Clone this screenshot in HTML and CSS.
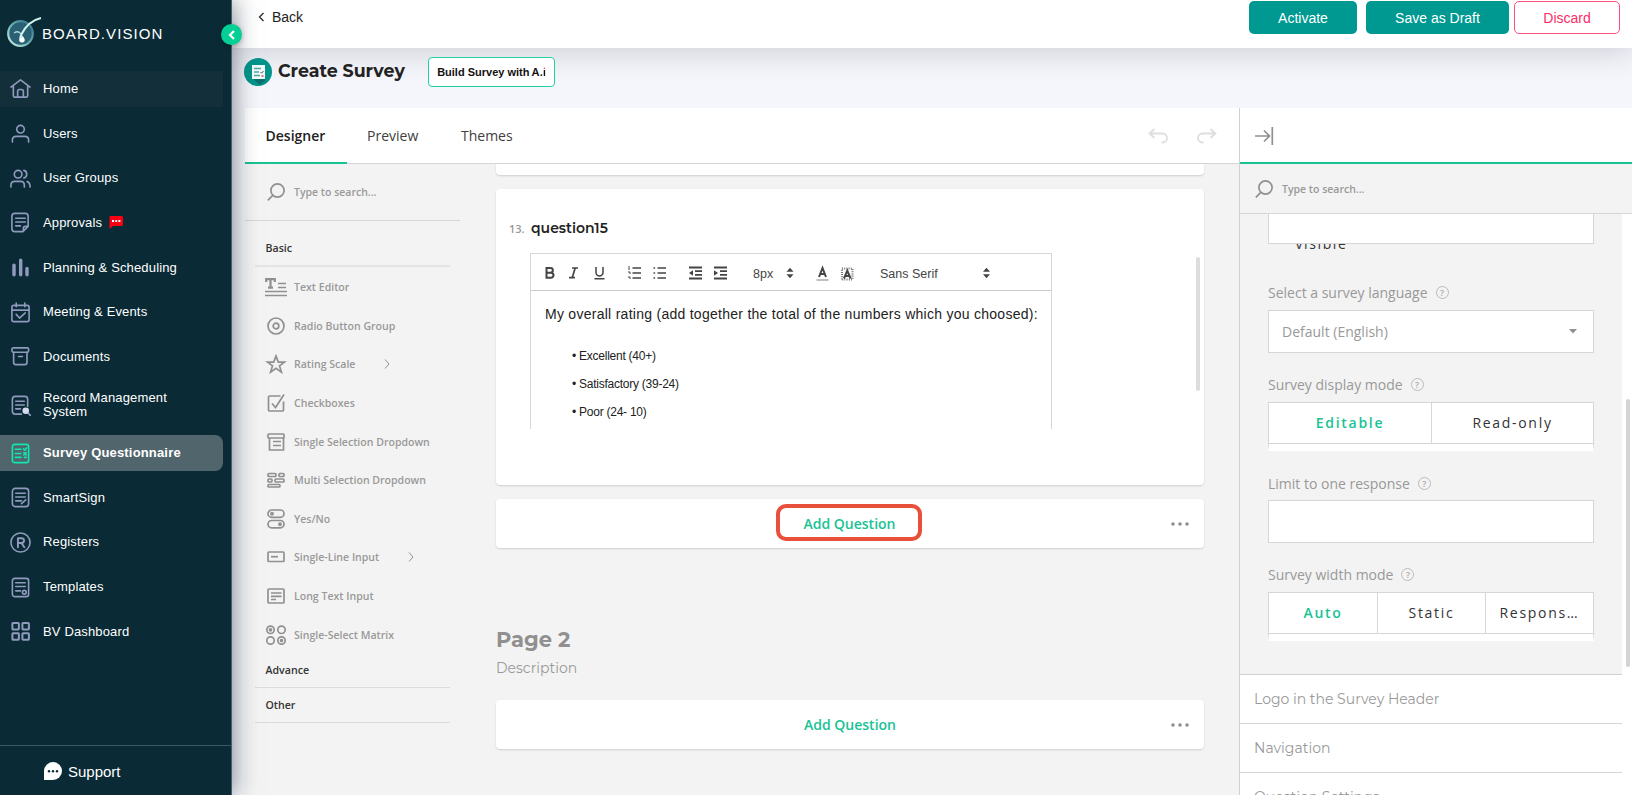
FILE: index.html
```html
<!DOCTYPE html>
<html lang="en">
<head>
<meta charset="utf-8">
<title>Create Survey</title>
<link rel="stylesheet" href="styles.css">
</head>
<body>
<div class="app">
  <aside class="sidebar">
    <div class="brand">
      <svg width="36" height="32" viewBox="0 0 36 32"><defs><linearGradient id="lg" x1="0" y1="1" x2="1" y2="0"><stop offset="0" stop-color="#d5f2ec"/><stop offset=".45" stop-color="#6db3b5"/><stop offset="1" stop-color="#2b6f86"/></linearGradient></defs><circle cx="14.500" cy="17.500" r="12.300" fill="#2a6074" stroke="url(#lg)" stroke-width="2.200"/><path d="M35 2C26 4 19 11 15 19c-1 3-1 6 0 6 3 1 3-1 2-3-1-1-2-2-2-3" fill="none" stroke="#d5f3ec" stroke-width="2"/><path d="M8 17c3-2 5-2 7 1" fill="none" stroke="#a9dcd6" stroke-width="1.300"/><circle cx="16" cy="24" r="2.500" fill="#fff"/></svg>
      <span>BOARD.VISION</span>
    </div>
    <nav class="menu">
      <a class="mi home"><svg class="ic" viewBox="0 0 22 22"><path d="M1 9.500 11 2l10 7.500M3.500 8v10.500q0 1.500 1.500 1.500h12q1.500 0 1.500-1.500V8M8 20v-6q0-2 2-2h2q2 0 2 2v6"/></svg><span>Home</span></a>
      <a class="mi"><svg class="ic" viewBox="0 0 22 22"><circle cx="11" cy="6.500" r="4"/><path d="M2.500 20v-2q0-4 4-4h9q4 0 4 4v2"/></svg><span>Users</span></a>
      <a class="mi"><svg class="ic" viewBox="0 0 22 22"><circle cx="8.500" cy="6.500" r="4"/><path d="M1 20v-2q0-4 4-4h6q4 0 4 4v2M14.500 2.500c4 1 4 7 0 8M18 14.300c2.500.7 3 2.200 3 5.700"/></svg><span>User Groups</span></a>
      <a class="mi"><svg class="ic" viewBox="0 0 22 22"><path d="M5 1.500h11q3 0 3 3V15l-5.500 5.500H5q-3 0-3-3v-13q0-3 3-3zM6 6.500h10M6 10.500h10M6 14.500h5M19 15h-3q-2 0-2 2v3"/></svg><span>Approvals</span><svg class="flag" width="14" height="13" viewBox="0 0 14 13"><path d="M1.500 0h11Q14 0 14 1.500v7Q14 10 12.500 10H4L.500 13V1.500Q.500 0 1.500 0z" fill="#fb0012"/><path d="M3 4h2v2H3zM6.200 4h2v2h-2zM9.400 4h2v2h-2z" fill="#fff"/></svg></a>
      <a class="mi"><svg class="ic" viewBox="0 0 22 22"><path d="M4.200 8.500v10M11.200 3.500v15M17.800 12v6.500" stroke-width="3.600"/></svg><span>Planning &amp; Scheduling</span></a>
      <a class="mi"><svg class="ic" viewBox="0 0 22 22"><rect x="2" y="3.500" width="18" height="17" rx="2"/><path d="M2 8.500h18M6.500 1v4M15.500 1v4M6.500 13l3.500 3.800 6-5.300"/></svg><span>Meeting &amp; Events</span></a>
      <a class="mi"><svg class="ic" viewBox="0 0 22 22"><rect x="2" y="2" width="17.500" height="4.500" rx="1.500"/><path d="M3.800 6.500v10.500q0 2.500 2.500 2.500h9q2.500 0 2.500-2.500V6.500M9 11h4"/></svg><span>Documents</span></a>
      <a class="mi tall"><svg class="ic" viewBox="0 0 22 22"><path d="M12 20H5.500Q2.500 20 2.500 17V4.500q0-3 3-3h10q3 0 3 3V12M6 6.500h9M6 10.500h9M6 14.500h5M19 19l2.500 2.500"/><circle cx="16.500" cy="16.500" r="2.600" fill="#d7dbf0" stroke="#d7dbf0"/></svg><span>Record Management<br>System</span></a>
      <a class="mi active"><svg class="ic" viewBox="0 0 22 22"><rect x="2.500" y="1.500" width="17" height="19" rx="2.500"/><path d="M5.500 6.500h6M5.500 11h6M5.500 15h6M14 6l1.500 1.500L17.500 5M14.500 10l2.500 2.500M17 10l-2.500 2.500M15 15h2"/></svg><span>Survey Questionnaire</span></a>
      <a class="mi"><svg class="ic" viewBox="0 0 22 22"><rect x="2.500" y="1.500" width="17" height="19" rx="3"/><path d="M6 6.500h10M6 10.500h10M6 14.500h6M12 17.500l4.500-4"/></svg><span>SmartSign</span></a>
      <a class="mi"><svg class="ic" viewBox="0 0 22 22"><circle cx="11" cy="11" r="10"/><path d="M8.300 16V6.500H12q2.700 0 2.700 2.500T12 11.500H8.300M12 11.500 15 16" stroke-width="2"/></svg><span>Registers</span></a>
      <a class="mi"><svg class="ic" viewBox="0 0 22 22"><rect x="2.500" y="1.500" width="17" height="19" rx="2.500"/><path d="M6 6h10M6 10h10M6 14.500h5"/><circle cx="15" cy="16" r="2"/></svg><span>Templates</span></a>
      <a class="mi"><svg class="ic" viewBox="0 0 22 22"><g stroke-width="2.100"><rect x="2.500" y="2" width="6.800" height="6.800" rx=".8"/><rect x="13" y="2" width="6.800" height="6.800" rx=".8"/><rect x="2.500" y="12.800" width="6.800" height="6.800" rx=".8"/><rect x="13" y="12.800" width="6.800" height="6.800" rx=".8"/></g></svg><span>BV Dashboard</span></a>
    </nav>
    <div class="support"><svg width="18" height="18" viewBox="0 0 18 18"><path d="M9 0a9 9 0 1 1 0 18H0V9a9 9 0 0 1 9-9z" fill="#fff"/><g fill="#0a2a35"><circle cx="5" cy="9.300" r="1.200"/><circle cx="9" cy="9.300" r="1.200"/><circle cx="13" cy="9.300" r="1.200"/></g></svg><span>Support</span></div>
    <div class="collapse"><svg width="8" height="10" viewBox="0 0 8 10"><path d="M6 1 2 5l4 4" fill="none" stroke="#fff" stroke-width="2.200"/></svg></div>
  </aside>

  <main class="main">
    <header class="top">
      <div class="back"><svg width="7" height="10" viewBox="0 0 7 10"><path d="M5.500 1 1.500 5l4 4" fill="none" stroke="#333" stroke-width="1.400"/></svg><span>Back</span></div>
      <div class="actions"><button class="btn b1">Activate</button><button class="btn b2">Save as Draft</button><button class="btn b3">Discard</button></div>
    </header>
    <div class="title">
      <svg width="28" height="28" viewBox="0 0 28 28"><circle cx="14" cy="14" r="14" fill="#03958b"/><path d="M21 8v15l-5 4-8-7z" fill="#0b6f6d"/><rect x="8" y="7" width="13" height="14" fill="#f4fbfb"/><path d="M10 10.500h7M10 14h5M10 17.500h6" stroke="#4aa8a6" stroke-width="1.300"/><path d="m16.500 14 1.200 1.200L19.500 13" fill="none" stroke="#333" stroke-width=".8"/><path d="M17.500 17H19.500V19H17.500z" fill="#f26a7c"/></svg>
      <h1>Create Survey</h1>
      <button class="ai"><span>Build Survey with</span><span class="aa">A.<span class="idot">i</span></span></button>
    </div>

    <div class="creator">
      <section class="left">
        <div class="tabs">
          <div class="tab on">Designer</div><div class="tab t2">Preview</div><div class="tab t3">Themes</div>
          <div class="hist">
            <svg width="20" height="16" viewBox="0 0 20 16"><path d="M6.500 1 1.500 5.500 6.500 10M2 5.500h12.500a4.300 4.300 0 0 1 0 9h-1"/></svg>
            <svg width="20" height="16" viewBox="0 0 20 16"><path d="M13.500 1 18.500 5.500 13.500 10M18 5.500H5.500a4.300 4.300 0 0 0 0 9h1"/></svg>
          </div>
        </div>
        <div class="work">
          <div class="toolbox">
            <div class="search"><svg width="18" height="18" viewBox="0 0 18 18"><circle cx="10.500" cy="7.500" r="6.600"/><path d="M6 12.200.800 17.300"/></svg><span>Type to search...</span></div>
            <div class="cat basic">Basic</div>
            <div class="ti"><svg viewBox="0 0 22 20" class="tic"><path d="M1.200 5V2.200h8.600V5M5.500 2v8.500M3 10.700h5" stroke-width="2.200"/><path d="M13 6.500h8M13 10.500h8M0 14.500h22M0 18.500h22" stroke-width="1.500"/></svg><span>Text Editor</span></div>
            <div class="ti"><svg viewBox="0 0 22 20" class="tic"><circle cx="11" cy="10" r="8"/><circle cx="11" cy="10" r="2.800"/></svg><span>Radio Button Group</span></div>
            <div class="ti"><svg viewBox="0 0 22 20" class="tic"><path d="m11 2 2.300 6.100h6.200l-5 3.700 1.900 6.300L11 14.300l-5.400 3.800 1.900-6.300-5-3.700h6.200z"/></svg><span>Rating Scale</span><svg class="chev" viewBox="0 0 6 10"><path d="m1 .500 4 4.500-4 4.500"/></svg></div>
            <div class="ti"><svg viewBox="0 0 22 20" class="tic"><path d="M15.500 3H4.500Q3.500 3 3.500 4v13q0 1 1 1h13q1 0 1-1V8.500M7 10.500l3.500 4L19 1.500"/></svg><span>Checkboxes</span></div>
            <div class="ti"><svg viewBox="0 0 22 20" class="tic"><rect x="3" y="2" width="16" height="4" rx=".8"/><path d="M4.500 6v12h14V6M8 9.500h8M8 13.500h8"/></svg><span>Single Selection Dropdown</span></div>
            <div class="ti"><svg viewBox="0 0 22 20" class="tic"><rect x="3" y="3.500" width="8" height="3" rx="1"/><rect x="14" y="3.500" width="5" height="3" rx="1"/><rect x="3" y="9" width="4" height="3" rx="1"/><rect x="10" y="9" width="9" height="3" rx="1"/><rect x="3" y="14.500" width="12" height="2.500" rx="1"/></svg><span>Multi Selection Dropdown</span></div>
            <div class="ti"><svg viewBox="0 0 22 20" class="tic"><rect x="3" y="1" width="16" height="7.300" rx="3.600"/><rect x="3" y="11.500" width="16" height="7.300" rx="3.600"/><circle cx="7" cy="4.700" r="1.100"/><circle cx="15" cy="15.200" r="1.100"/></svg><span>Yes/No</span></div>
            <div class="ti"><svg viewBox="0 0 22 20" class="tic"><rect x="3" y="5" width="16" height="9.500" rx="1"/><path d="M6 9.700h7"/></svg><span>Single-Line Input</span><svg class="chev" viewBox="0 0 6 10"><path d="m1 .500 4 4.500-4 4.500"/></svg></div>
            <div class="ti"><svg viewBox="0 0 22 20" class="tic"><rect x="3" y="3" width="16" height="14" rx="1"/><path d="M6 7h10.500M6 10.300h10.500M6 13.500h5"/></svg><span>Long Text Input</span></div>
            <div class="ti"><svg viewBox="0 0 22 20" class="tic"><circle cx="5.500" cy="4.800" r="3.700"/><circle cx="16.500" cy="4.800" r="3.700"/><circle cx="5.500" cy="15.500" r="3.700"/><circle cx="16.500" cy="15.500" r="3.700"/><circle cx="5.500" cy="4.800" r="1"/><circle cx="16.500" cy="15.500" r="1"/></svg><span>Single-Select Matrix</span></div>
            <div class="cat adv">Advance</div>
            <div class="cat oth">Other</div>
          </div>
          <div class="canvas">
            <div class="card stub"></div>
            <div class="card question">
              <div class="qbody">
                <div class="qt"><span class="num">13.</span><span class="qname">question15</span></div>
                <div class="editor">
                  <div class="bar">
                    <svg width="460" height="20" viewBox="0 0 460 20" class="barsvg">
                      <g fill="none" stroke="#444" stroke-width="2">
                        <path d="M1.500 5h4a2.300 2.300 0 0 1 0 4.700h-4zM1.500 9.700h4.500a2.500 2.500 0 0 1 0 5H1.500z"/>
                        <path d="M27 5h6M24 14.700h6M30.200 5l-3 9.700" stroke-width="1.700"/>
                        <path d="M51 4v5.500a3.500 3.500 0 0 0 7 0V4M49.500 15.700h10" stroke-width="1.500"/>
                        <path d="M87.500 5h8.500M87.500 10h8.500M87.500 15h8.500M112.500 5h8.500M112.500 10h8.500M112.500 15h8.500" stroke-width="1.700"/>
                        <path d="M84 3v4M83 9h2v2M83 14h2v2" stroke-width="1"/>
                        <path d="M108.500 5h1.600M108.500 10h1.600M108.500 15h1.600" stroke-width="1.700"/>
                        <path d="M144 4.500h13M150 8.200h7M150 11.800h7M144 15.500h13M169 4.500h13M175 8.200h7M175 11.800h7M169 15.500h13" stroke-width="1.800"/>
                        <path d="M271.500 17h12" stroke="#aaa" stroke-width="1.500"/>
                        <path d="m274 14 3.500-9 3.500 9M275.500 11h4.500"/>
                        <path d="M297 16.500V5.500h10.500v11z" stroke-dasharray="1 1.200" stroke-width="2.200" stroke="#777"/>
                        <path d="m299 15.500 3.300-8 3.300 8M300.500 13h4"/>
                      </g>
                      <g fill="#444"><path d="m144 10 4-2.700v5.500zM173 10l-4-2.700v5.500zM241.500 8.800l3.500-4 3.500 4zM241.500 11.200l3.500 4 3.500-4zM445 8.800h-7l3.500-4zM438 11.200h7l-3.500 4z"/></g>
                    </svg>
                    <span class="px">8px</span><span class="ff">Sans Serif</span>
                  </div>
                  <p>My overall rating (add together the total of the numbers which you choosed):</p>
                  <div class="li">• Excellent (40+)</div><div class="li">• Satisfactory (39-24)</div><div class="li">• Poor (24- 10)</div>
                </div>
              </div>
              <div class="qscroll"></div>
            </div>
            <div class="card add"><span class="ring">Add Question</span><svg class="dots" width="18" height="4" viewBox="0 0 18 4"><circle cx="2" cy="2" r="1.800"/><circle cx="9" cy="2" r="1.800"/><circle cx="16" cy="2" r="1.800"/></svg></div>
            <h2>Page 2</h2>
            <div class="desc">Description</div>
            <div class="card add"><span class="addtxt">Add Question</span><svg class="dots" width="18" height="4" viewBox="0 0 18 4"><circle cx="2" cy="2" r="1.800"/><circle cx="9" cy="2" r="1.800"/><circle cx="16" cy="2" r="1.800"/></svg></div>
          </div>
        </div>
      </section>

      <aside class="props">
        <div class="phead"><svg width="20" height="18" viewBox="0 0 20 18"><path d="M0 9h14M9 3.500 14.500 9 9 14.500M17.300 0v18" fill="none" stroke="#909090" stroke-width="1.700"/></svg></div>
        <div class="search psearch"><svg width="18" height="18" viewBox="0 0 18 18"><circle cx="10.500" cy="7.500" r="6.600"/><path d="M6 12.200.800 17.300"/></svg><span>Type to search...</span></div>
        <div class="pscroll">
          <div class="grey">
            <div class="box cut"></div>
            <div class="vis"><span>visible</span></div>
            <div class="lbl l1"><span>Select a survey language</span><i>?</i></div>
            <div class="box sel"><span>Default (English)</span><svg width="8" height="5" viewBox="0 0 8 5"><path d="M0 0h8L4 4.500z" fill="#909090"/></svg></div>
            <div class="lbl l2"><span>Survey display mode</span><i>?</i></div>
            <div class="seg two"><b>Editable</b><span>Read-only</span></div>
            <div class="lbl l3"><span>Limit to one response</span><i>?</i></div>
            <div class="box"></div>
            <div class="lbl l2"><span>Survey width mode</span><i>?</i></div>
            <div class="seg three"><b>Auto</b><span>Static</span><span>Respons…</span></div>
          </div>
          <div class="prow">Logo in the Survey Header</div>
          <div class="prow">Navigation</div>
          <div class="prow">Question Settings</div>
          <div class="thumb"></div>
        </div>
      </aside>
    </div>
  </main>
</div>
</body>
</html>
```
FILE: styles.css
```css
* { box-sizing: border-box; }
body { margin: 0; font-family: "Liberation Sans", Arial, sans-serif; overflow: hidden; }
h1, h2, p { margin: 0; }
button { font-family: inherit; margin: 0; padding: 0; }
.app { display: flex; width: 1632px; height: 795px; overflow: hidden; background: #f5f6fb; }

/* Sidebar */
.sidebar { position: relative; z-index: 5; flex: none; width: 232px; height: 795px; background: #0a2a35; border-right: 1px solid #48606a; box-shadow: 2px 0 22px rgba(20, 30, 50, .5); display: flex; flex-direction: column; color: #fff; }
.brand { height: 66px; padding: 16px 0 0 6px; display: flex; align-items: flex-start; }
.brand span { font-size: 15px; letter-spacing: 1.1px; line-height: 36px; white-space: nowrap; }
.menu { flex: 1; }
.mi { display: flex; align-items: center; height: 44.7px; padding: 1px 0 0 10px; font-size: 13px; letter-spacing: .15px; line-height: 14px; position: relative; }
.mi > * { position: relative; }
.mi > span { margin-left: 12px; white-space: nowrap; }
.ic { width: 21px; height: 21px; fill: none; stroke: #8f9abd; stroke-width: 1.7; stroke-linecap: round; stroke-linejoin: round; }
.mi > .flag { margin-left: 7px; }
.tall { height: 51.4px; }
.home::before, .active::before { content: ""; position: absolute; left: 0; top: 5px; width: 223px; height: 36px; background: #132f3a; }
.active::before { background: #51656c; border-radius: 0 8px 8px 0; }
.active { font-weight: bold; letter-spacing: .17px; }
.active .ic { stroke: #10e8b0; }
.support { height: 50px; border-top: 1px solid #3d5761; display: flex; align-items: center; padding: 1px 0 0 44px; font-size: 15px; }
.support span { margin-left: 6px; }
.collapse { position: absolute; left: 221px; top: 24px; width: 21px; height: 21px; border-radius: 50%; background: #05cf95; display: flex; align-items: center; justify-content: center; box-shadow: 0 1px 5px rgba(0, 0, 0, .25); }

/* Header */
.main { flex: 1; min-width: 0; display: flex; flex-direction: column; }
.top { position: relative; z-index: 2; height: 48px; background: #fff; box-shadow: 0 2px 32px rgba(50, 60, 80, .24); display: flex; justify-content: space-between; padding: 1px 12px 0 26px; }
.back { display: flex; align-items: center; height: 32px; font-size: 14px; color: #222; gap: 7px; }
.actions { display: flex; height: 33px; }
.btn { border: 0; border-radius: 5px; background: #009991; color: #fff; font-size: 14px; }
.b1 { width: 108px; }
.b2 { width: 143px; margin-left: 9px; }
.b3 { width: 106px; margin-left: 5px; background: #fff; border: 1px solid #ff4f80; color: #fb2d68; }
.title { position: relative; z-index: 3; height: 60px; padding: 9px 0 0 12px; display: flex; align-items: flex-start; }
.title > svg { margin-top: 1px; }
h1 { font: 700 17.4px/27px Montserrat, Inter, sans-serif; color: #222; margin-left: 6px; width: 150px; white-space: nowrap; }
.ai { width: 127px; height: 30px; background: #fff; border: 1px solid #1fd1a0; border-radius: 4px; font-weight: bold; font-size: 11px; color: #111; white-space: nowrap; display: flex; align-items: center; justify-content: center; gap: 2px; }
.aa { font: 600 11px/14px Inter, sans-serif; }
.idot { background: linear-gradient(#f2356b 0 5px, #111 5px); -webkit-background-clip: text; background-clip: text; color: transparent; }

/* Designer */
.creator { flex: none; display: flex; height: 687px; padding-left: 13px; font-family: "Open Sans", sans-serif; }
.left { width: 994px; display: flex; flex-direction: column; background: #f3f3f3; }
.tabs { height: 56px; background: #fff; border-bottom: 1px solid #d6d6d6; display: flex; flex: none; }
.tab { height: 56px; line-height: 55px; font-size: 14px; color: #404040; padding-left: 20.5px; }
.tab.on { width: 101.5px; font-weight: 600; color: #222; border-bottom: 2px solid #19c394; }
.t2 { width: 94px; }
.hist { margin-left: auto; padding: 20px 22px 0 0; display: flex; gap: 29px; }
.hist svg { fill: none; stroke: #dedede; stroke-width: 1.8; }
.work { flex: 1; display: flex; min-height: 0; }
.toolbox { width: 215px; }
.search { height: 57px; border-bottom: 1px solid #d6d6d6; display: flex; align-items: center; padding-left: 22px; font-size: 10.5px; font-weight: 600; color: #999; gap: 9px; }
.search svg { fill: none; stroke: #909090; stroke-width: 1.7; }
.cat { margin: 0 10px 0 10px; padding-left: 10.5px; font-size: 10.6px; font-weight: 600; color: #333; border-bottom: 1px solid #dcdcdc; }
.basic { height: 46px; line-height: 55px; border-bottom: 2px solid #e4e4e4; margin-bottom: 1px; }
.adv { height: 34px; line-height: 32px; }
.oth { height: 35px; line-height: 35px; }
.ti { height: 38.6px; display: flex; align-items: center; padding-left: 20px; font-size: 10.55px; font-weight: 600; color: #999; white-space: nowrap; }
.tic { width: 22px; height: 20px; margin-right: 7px; fill: none; stroke: #909090; stroke-width: 1.7; }
.chev { width: 6px; height: 10px; fill: none; stroke: #909090; margin-left: 29px; }

.canvas { margin-left: 36px; width: 708px; }
.card { background: #fff; border-radius: 4px; box-shadow: 0 1px 2px rgba(0, 0, 0, .15); }
.stub { height: 11px; border-radius: 0 0 4px 4px; margin-bottom: 14px; }
.question { height: 296px; display: flex; justify-content: space-between; padding: 0 4px 0 13px; }
.qt { padding-top: 30px; height: 64px; display: flex; align-items: flex-start; line-height: 20px; }
.num { width: 22px; font-size: 11px; font-weight: 600; color: #999; line-height: 19px; }
.qname { font: 600 14px/19px Montserrat, Inter, sans-serif; color: #222; }
.editor { margin-left: 21px; width: 522px; height: 176px; border: 1px solid #d6d6d6; border-bottom: 0; font-family: "Liberation Sans", Arial, sans-serif; color: #222; }
.bar { position: relative; height: 37px; border-bottom: 1px solid #ccc; padding: 9px 0 0 14px; }
.barsvg { display: block; }
.px, .ff { position: absolute; top: 12px; left: 222px; font-size: 12.5px; line-height: 16px; color: #444; }
.ff { left: 349px; }
.editor p { padding: 15px 0 0 14px; font-size: 14px; line-height: 17px; white-space: nowrap; margin-bottom: 19px; letter-spacing: .27px; }
.li { padding-left: 41px; font-size: 12px; line-height: 28px; letter-spacing: -.25px; }
.qscroll { width: 4px; height: 134px; margin-top: 68px; background: #ddd; border-radius: 2px; }
.add { position: relative; height: 49px; margin-top: 14px; display: flex; align-items: center; justify-content: center; color: #19c394; font-size: 14px; font-weight: 600; }
.ring { border: 4px solid #e8503c; border-radius: 10px; width: 146px; height: 37px; line-height: 32px; text-align: center; margin: -3px 3px 0 0; padding-left: 2px; }
.dots { position: absolute; right: 15px; top: 23px; fill: #909090; }
h2 { font: 700 21px/28px Montserrat, Inter, sans-serif; color: #909090; margin-top: 78px; }
.desc { font: 400 14px/20px Montserrat, Inter, sans-serif; color: #999; margin-top: 4px; margin-bottom: 22px; }

/* Property panel */
.props { flex: 1; border-left: 1px solid #d0d0d0; background: #fff; display: flex; flex-direction: column; }
.phead { height: 56px; border-bottom: 2px solid #19c394; padding: 19px 0 0 15px; flex: none; }
.psearch { height: 50px; flex: none; background: #f3f3f3; padding-left: 15px; gap: 9px; }
.pscroll { position: relative; flex: 1; overflow: hidden; padding-right: 10px; }
.grey { background: #f3f3f3; height: 461px; padding: 0 28px; border-bottom: 1px solid #d0d0d0; }
.box { height: 43px; background: #fff; border: 1px solid #d6d6d6; }
.cut { height: 30px; border-top: 0; }
.vis { height: 12px; overflow: hidden; color: #333; font-size: 14px; letter-spacing: 1.6px; padding-left: 27.5px; }
.vis span { display: block; line-height: 14px; margin-top: -7px; }
.lbl { display: flex; align-items: center; gap: 8px; font-size: 14px; color: #999; height: 20px; }
.lbl i { width: 13px; height: 13px; border: 1px solid #bbb; border-radius: 50%; font: 600 9px/11px "Open Sans", sans-serif; text-align: center; color: #aaa; }
.l1 { margin: 26px 0 8px; }
.l2 { margin: 21px 0 8px; }
.l3 { margin: 22px 0 7px; }
.sel { display: flex; align-items: center; justify-content: space-between; padding: 0 16px 0 13px; font-size: 14px; color: #999; }
.seg { height: 49px; display: grid; border: 1px solid #d6d6d6; border-bottom: 7px solid #fff; background: #fff; font-size: 14px; letter-spacing: 1.7px; color: #333; line-height: 40px; text-align: center; }
.two { grid-template-columns: 1fr 1fr; }
.three { grid-template-columns: 1fr 1fr 1fr; }
.seg > * { border-bottom: 1px solid #d6d6d6; }
.seg > * + * { border-left: 1px solid #d6d6d6; }
.seg b { color: #19c394; font-weight: 600; }
.prow { height: 49px; line-height: 49px; padding-left: 14px; border-bottom: 1px solid #d6d6d6; font-family: Montserrat, Inter, sans-serif; font-size: 14px; color: #999; }
.thumb { position: absolute; right: 2px; top: 185px; width: 4px; height: 268px; border-radius: 2px; background: #d4d4d4; }
```
